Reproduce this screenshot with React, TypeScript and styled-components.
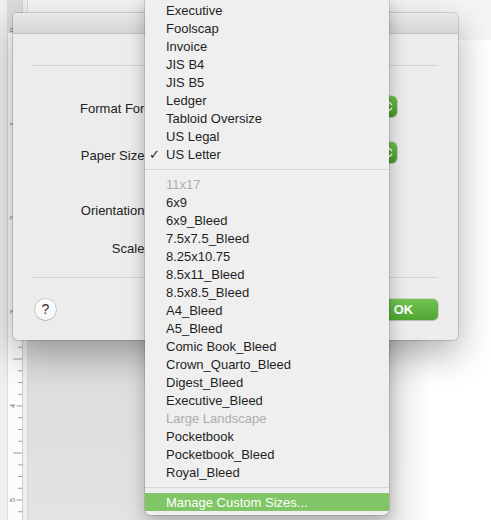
import React from 'react'
import styled, { createGlobalStyle } from 'styled-components'

const GlobalStyle = createGlobalStyle`
  html, body {
    margin: 0;
    padding: 0;
    background: #fff;
  }
  body {
    font-family: "Liberation Sans", Arial, sans-serif;
    font-size: 13px;
    color: #222;
  }
`

const Screen = styled.div`
  position: relative;
  width: 491px;
  height: 520px;
  overflow: hidden;
  display: flex;
  background: #fff;
`

const Gutter = styled.div`
  flex: 0 0 7px;
  background: #efefef;
`

const RulerSvg = styled.svg`
  flex: 0 0 21px;
  display: block;
`

const Canvas = styled.div`
  flex: 1;
  display: flex;
  flex-direction: column;
`

const TopStrip = styled.div`
  flex: 0 0 40px;
  background: #f5f5f5;
`

const Workspace = styled.div`
  flex: 1;
  background:
    linear-gradient(to right, rgba(255, 255, 255, 0) 0, rgba(255, 255, 255, 0) 355px, #fff 400px),
    linear-gradient(to bottom, #cfcfcf, #e3e3e3);
`

// the page setup sheet
const Dialog = styled.div`
  position: absolute;
  left: 13px;
  top: 13px;
  width: 445px;
  height: 327px;
  display: flex;
  flex-direction: column;
  background: #ececec;
  border-radius: 3px 5px 5px 5px;
  box-shadow: 0 0 0 1px rgba(0, 0, 0, 0.14), 0 14px 36px rgba(0, 0, 0, 0.32);
  overflow: hidden;
`

const TitleBar = styled.div`
  flex: 0 0 20px;
  background: linear-gradient(to bottom, #e9e9e9, #d5d5d5);
  border-bottom: 1px solid #c2c2c2;
`

const Body = styled.div`
  flex: 1;
  display: flex;
  flex-direction: column;
  padding: 31px 20px 0;
`

const Separator = styled.div<{ $gap?: number }>`
  height: 1px;
  background: #d3d3d3;
  margin-top: ${p => p.$gap ?? 0}px;
`

const Form = styled.div`
  display: grid;
  grid-template-columns: 115px 246px;
  grid-template-rows: 46px 46px 44px 32px;
  column-gap: 3px;
  margin-top: 30px;
`

const Label = styled.div<{ $top?: number }>`
  text-align: right;
  line-height: 16px;
  white-space: nowrap;
  align-self: ${p => (p.$top !== undefined ? 'start' : 'center')};
  padding-top: ${p => p.$top ?? 2}px;
`

const Field = styled.div<{ $center?: boolean }>`
  display: flex;
  flex-direction: column;
  align-self: ${p => (p.$center ? 'center' : 'start')};
  padding-left: 4px;
`

const Popup = styled.div`
  height: 21px;
  display: flex;
  align-items: center;
  border-radius: 5px;
  background: linear-gradient(to bottom, #ffffff, #f3f3f3);
  box-shadow: 0 0 0 0.5px rgba(0, 0, 0, 0.25), 0 1px 1px rgba(0, 0, 0, 0.12);
`

const PopupCap = styled.span`
  margin-left: auto;
  width: 16px;
  align-self: stretch;
  display: flex;
  align-items: center;
  justify-content: center;
  border-radius: 0 5px 5px 0;
  background: linear-gradient(to bottom, #6cc24a, #45992a);
`

const OrientRow = styled.div`
  display: flex;
  gap: 6px;
`

const OrientButton = styled.div<{ $on?: boolean }>`
  width: 34px;
  height: 30px;
  border-radius: 5px;
  display: flex;
  align-items: center;
  justify-content: center;
  background: ${p => (p.$on ? '#d8d8d8' : '#fff')};
  box-shadow: 0 0 0 0.5px rgba(0, 0, 0, 0.2);
`

const ScaleInput = styled.div`
  width: 48px;
  height: 19px;
  background: #fff;
  box-shadow: 0 0 0 1px #c8c8c8;
`

const Footer = styled.div`
  flex: 0 0 62px;
  display: flex;
  align-items: center;
  padding-left: 2px;
`

const HelpButton = styled.div`
  width: 21px;
  height: 21px;
  border-radius: 50%;
  display: flex;
  align-items: center;
  justify-content: center;
  background: linear-gradient(to bottom, #ffffff, #f6f6f6);
  box-shadow: 0 0 0 0.5px rgba(0, 0, 0, 0.28), 0 1px 1px rgba(0, 0, 0, 0.12);
  color: #2c2c2c;
  font-size: 14px;
`

const Buttons = styled.div`
  margin-left: auto;
  display: flex;
  gap: 12px;
`

const Button = styled.div<{ $primary?: boolean }>`
  width: 66px;
  height: 21px;
  border-radius: 5px;
  display: flex;
  align-items: center;
  justify-content: center;
  padding-right: 3px;
  box-sizing: border-box;
  font-weight: ${p => (p.$primary ? 'bold' : 'normal')};
  color: ${p => (p.$primary ? '#fff' : '#262626')};
  background: ${p =>
    p.$primary
      ? 'linear-gradient(to bottom, #72c452, #4fa532)'
      : 'linear-gradient(to bottom, #ffffff, #f3f3f3)'};
  box-shadow: 0 0 0 0.5px rgba(0, 0, 0, 0.22), 0 1px 1px rgba(0, 0, 0, 0.12);
`

// the open paper size menu
const Menu = styled.div`
  position: absolute;
  left: 145px;
  top: -3px;
  width: 244px;
  padding: 4px 0;
  background: #efefef;
  border-radius: 5px;
  box-shadow: 0 0 0 0.5px rgba(0, 0, 0, 0.22), 0 6px 18px rgba(0, 0, 0, 0.28);
`

const MenuItem = styled.div<{ $disabled?: boolean; $active?: boolean }>`
  position: relative;
  height: 18px;
  line-height: 19px;
  padding-left: 21px;
  white-space: nowrap;
  color: ${p => (p.$active ? '#fff' : p.$disabled ? '#adadad' : '#1f1f1f')};
  background: ${p => (p.$active ? '#80c566' : 'transparent')};
`

const Check = styled.span`
  position: absolute;
  left: 4px;
  top: 0;
  font-family: "DejaVu Sans", sans-serif;
  font-size: 13px;
`

const MenuSeparator = styled.div`
  height: 12px;
  display: flex;
  align-items: center;

  &::after {
    content: '';
    flex: 1;
    height: 1px;
    background: #d6d6d6;
  }
`

const standardSizes = [
  'Executive',
  'Foolscap',
  'Invoice',
  'JIS B4',
  'JIS B5',
  'Ledger',
  'Tabloid Oversize',
  'US Legal',
  'US Letter',
]

const customSizes = [
  '11x17',
  '6x9',
  '6x9_Bleed',
  '7.5x7.5_Bleed',
  '8.25x10.75',
  '8.5x11_Bleed',
  '8.5x8.5_Bleed',
  'A4_Bleed',
  'A5_Bleed',
  'Comic Book_Bleed',
  'Crown_Quarto_Bleed',
  'Digest_Bleed',
  'Executive_Bleed',
  'Large Landscape',
  'Pocketbook',
  'Pocketbook_Bleed',
  'Royal_Bleed',
]

const disabledSizes = ['11x17', 'Large Landscape']
const selectedSize = 'US Letter'

const Ruler: React.FC = () => {
  const ticks = Array.from({ length: 43 }, (_, i) => i)
  return (
    <RulerSvg width="21" height="520" viewBox="0 0 21 520">
      <rect x="0" y="0" width="15.5" height="520" fill="#fcfcfc" />
      <rect x="0" y="0" width="15.5" height="33" fill="#dcdcdc" />
      <rect x="16" y="0" width="5" height="520" fill="#efefef" />
      <line x1="0.5" y1="0" x2="0.5" y2="520" stroke="#dadada" />
      <line x1="15.5" y1="0" x2="15.5" y2="520" stroke="#cfcfcf" />
      <line x1="20.5" y1="0" x2="20.5" y2="520" stroke="#d8d8d8" />
      {ticks.map(i => {
        const y = 30 + i * 11.75
        if (i % 8 === 0) {
          return (
            <g key={i}>
              <line x1="9.5" y1={y} x2="15.5" y2={y} stroke="#9a9a9a" />
              <text
                x="5"
                y={y}
                fontSize="8"
                fill="#777"
                textAnchor="middle"
                dominantBaseline="central"
                fontFamily="Liberation Sans, sans-serif"
                transform={`rotate(-90 5 ${y})`}
              >
                {i / 8}
              </text>
            </g>
          )
        }
        const x1 = i % 4 === 0 ? 6 : 11.3
        return <line key={i} x1={x1} y1={y} x2="15.5" y2={y} stroke="#9a9a9a" />
      })}
    </RulerSvg>
  )
}

const Arrows: React.FC = () => (
  <svg width="7" height="11" viewBox="0 0 7 11">
    <path d="M1 4 L3.5 1.5 L6 4 M1 7 L3.5 9.5 L6 7" fill="none" stroke="#fff" strokeWidth="1.4" />
  </svg>
)

const PageIcon: React.FC<{ landscape?: boolean }> = ({ landscape }) => (
  <svg width="20" height="20" viewBox="0 0 20 20">
    {landscape ? (
      <rect x="2" y="5" width="16" height="11" fill="#fff" stroke="#555" />
    ) : (
      <rect x="4.5" y="2" width="11" height="16" fill="#fff" stroke="#555" />
    )}
  </svg>
)

const App: React.FC = () => {
  return (
    <>
      <GlobalStyle />
      <Screen>
        <Gutter />
        <Ruler />
        <Canvas>
          <TopStrip />
          <Workspace />
        </Canvas>

        <Dialog>
          <TitleBar />
          <Body>
            <Separator />
            <Form>
              <Label $top={5}>Format For:</Label>
              <Field>
                <Popup>
                  <PopupCap>
                    <Arrows />
                  </PopupCap>
                </Popup>
              </Field>

              <Label $top={6}>Paper Size:</Label>
              <Field>
                <Popup>
                  <PopupCap>
                    <Arrows />
                  </PopupCap>
                </Popup>
              </Field>

              <Label>Orientation:</Label>
              <Field $center>
                <OrientRow>
                  <OrientButton $on>
                    <PageIcon />
                  </OrientButton>
                  <OrientButton>
                    <PageIcon landscape />
                  </OrientButton>
                </OrientRow>
              </Field>

              <Label>Scale:</Label>
              <Field $center>
                <ScaleInput />
              </Field>
            </Form>
            <Separator $gap={13} />
            <Footer>
              <HelpButton>?</HelpButton>
              <Buttons>
                <Button $primary>OK</Button>
              </Buttons>
            </Footer>
          </Body>
        </Dialog>

        <Menu>
          {standardSizes.map(size => (
            <MenuItem key={size}>
              {size === selectedSize && <Check>✓</Check>}
              {size}
            </MenuItem>
          ))}
          <MenuSeparator />
          {customSizes.map(size => (
            <MenuItem key={size} $disabled={disabledSizes.includes(size)}>
              {size}
            </MenuItem>
          ))}
          <MenuSeparator />
          <MenuItem $active>Manage Custom Sizes...</MenuItem>
        </Menu>
      </Screen>
    </>
  )
}

export default App
